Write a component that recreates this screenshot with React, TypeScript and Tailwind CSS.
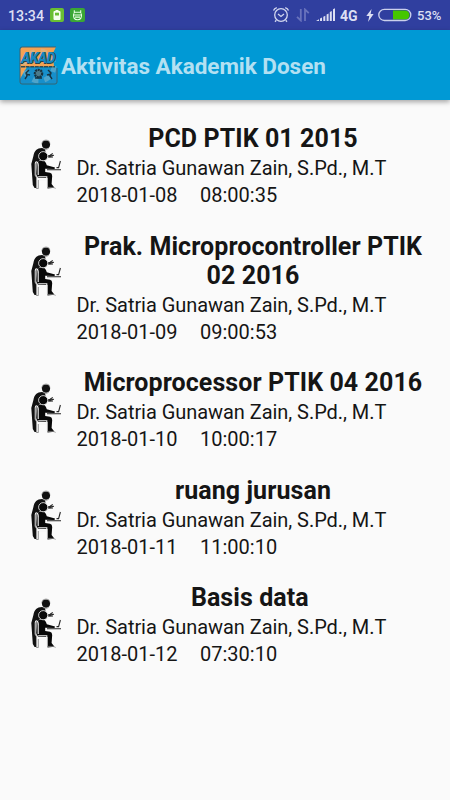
const items = [
  { title: 'PCD PTIK 01 2015', date: '2018-01-08', time: '08:00:35' },
  { title: 'Prak. Microprocontroller PTIK 02 2016', date: '2018-01-09', time: '09:00:53' },
  { title: 'Microprocessor PTIK 04 2016', date: '2018-01-10', time: '10:00:17' },
  { title: 'ruang jurusan', date: '2018-01-11', time: '11:00:10' },
  { title: 'Basis data\u00a0', date: '2018-01-12', time: '07:30:10' },
];

function StatusBar() {
  return (
    <div className="flex h-[30px] shrink-0 items-center bg-[#303f9f] pl-[8px] text-[#dcdff3]">
      <span className="w-[42px] whitespace-nowrap pt-[2px] text-[14.2px] font-medium leading-[28px]">13:34</span>
      <svg className="h-[14px] w-[14px]" viewBox="0 0 14 14">
        <rect width="14" height="14" rx="2" fill="#69bf33" />
        <path d="M5.5 2h3v1h1a1 1 0 0 1 1 1v7a1 1 0 0 1-1 1h-5a1 1 0 0 1-1-1v-7a1 1 0 0 1 1-1h1z" fill="#f5fff0" />
        <path d="M5 4.7h4v2.8H5z" fill="#69bf33" />
      </svg>
      <svg className="ml-[6px] h-[14px] w-[15px]" viewBox="0 0 15 14">
        <rect width="15" height="14" rx="2" fill="#3aa635" />
        <path d="M4.3 2.2v3M10.7 2.2v3M4.3 4.2h6.4M3 7h9M3.7 5.5c-.8 4 .6 6.2 3.8 6.2s4.6-2.2 3.8-6.2M5 9.1h5" fill="none" stroke="#e6ffe3" strokeWidth="1.1" />
      </svg>
      <svg className="ml-[187px] h-[18px] w-[18px]" viewBox="0 0 18 18" fill="none" stroke="#d2d7ef">
        <circle cx="9" cy="9" r="6.3" strokeWidth="1.3" />
        <path d="M1.5 4.5Q2.3 2.2 4.8 1.6M13.2 1.6Q15.7 2.2 16.5 4.5M6 8l3 2.4L12 8M4.3 14.3l-1.3 1.4M13.7 14.3l1.3 1.4" strokeWidth="1.3" />
      </svg>
      <svg className="ml-[6px] h-[14px] w-[14px]" viewBox="0 0 14 14" fill="none" stroke="#6973bc" strokeWidth="1.8">
        <path d="M4.8 1v11.5L1 8.8M9 13V1.5L12.8 5.2" />
      </svg>
      <svg className="ml-[6px] h-[14px] w-[20px]" viewBox="0 0 20 14" fill="#dcdff3">
        <path d="M0 13l3-1.8V13zM4 10.5l2-1V13H4zM7.3 8.7l2-1V13h-2zM10.6 6.5l2-1V13h-2zM13.8 4l2-1v10h-2zM17 1.3l2-1V13h-2z" />
      </svg>
      <span className="ml-[4px] w-[23px] pt-[2px] text-[14px] font-bold leading-[28px]">4G</span>
      <svg className="ml-[3px] h-[13px] w-[8px]" viewBox="0 0 8 13">
        <path d="M5.6 0L.3 7.1h3L2 13l5.6-7.9h-3z" fill="#dcdff3" />
      </svg>
      <svg className="ml-[4px] h-[14px] w-[34px]" viewBox="0 0 34 14">
        <path d="M15 2.5h12a4.5 4.5 0 0 1 0 9H15z" fill="#45c600" />
        <rect x=".8" y="1.3" width="32" height="11.2" rx="5.6" fill="none" stroke="#cbd0ec" strokeWidth="1.3" />
      </svg>
      <span className="ml-[5px] pt-[2px] text-[13px] font-medium leading-[28px]">53%</span>
    </div>
  );
}

function AppLogo() {
  return (
    <div className="relative h-[39px] w-[39px] shrink-0">
      <svg className="h-[39px] w-[39px]" viewBox="0 0 39 39">
        <path d="M3 1H37L34 7L35 21L8 21L1 34V3Z" fill="#f3a252" />
        <path d="M6 24L10 22H38V37H1V33Z" fill="#168fcb" />
        <circle cx="20" cy="20" r="15" fill="none" stroke="#b5cccb" strokeWidth="5" strokeDasharray="6 6" opacity=".35" />
        <path d="M37 1H3Q1 1 1 3V36Q1 38 3 38H36Q38 38 38 36V22" fill="none" stroke="#3b6170" strokeWidth="1" />
        <path d="M2 20.8H36" stroke="#344a4e" strokeWidth="1.6" strokeDasharray="4 .6" />
        <circle cx="19.5" cy="27.5" r="3.7" fill="#4c7b8b" stroke="#173341" strokeWidth="2.2" strokeDasharray="2 .7" />
        <path d="M16 32h7M10 24l-3 3 1 3-2 3M7 28l4 1M29 24l3 3-1 3 2 3M32 28l-4 1" fill="none" stroke="#173341" strokeWidth="1.4" />
      </svg>
      <span className="absolute left-[2px] top-[4px] text-[14px] font-black italic leading-[17px] tracking-[-0.6px] text-[#1788c0] [text-shadow:1px_0_0_#29424b,0_1px_0_#29424b]">AKAD</span>
    </div>
  );
}

function LecturerIcon() {
  return (
    <svg className="mt-[17px] h-[52px] w-[32px] shrink-0" viewBox="0 0 32 52">
      <path d="M12 9C7 9 4.3 11.8 3.4 17L1.3 25L2.8 46L4.6 49H7V45L6.3 41L6.5 24L10 21L10 16L15.5 12.8L15 10Z" fill="#111" />
      <circle cx="16" cy="5.6" r="4.1" fill="#111" />
      <path d="M11.5 4.8Q12 .9 16 .9T20 4.6M13.3 9.8Q16.3 11.8 18.8 9.3" fill="none" stroke="#888" strokeWidth=".6" />
      <path d="M17.2 17.1L20 16.2L22.8 14.6M18 17.4L24 16.2M18.2 18.1L23 18" fill="none" stroke="#292929" strokeWidth="1.1" />
      <path d="M7.5 23Q9.5 20.8 13 21.5Q15.7 22 16.8 26.3L25 28.4L24.5 30L15.2 29.7V33L20 33.7Q22.2 34.3 22.2 37L21.6 45L24.5 48.8L17.5 49.5L17.5 39L8 38.7L6.3 35Z" fill="#080808" />
      <circle cx="13.2" cy="17.2" r="4.6" fill="#080808" stroke="#fafafa" strokeWidth=".8" />
      <path d="M5.3 24.5Q5.7 22.2 7.2 23.1Q8.6 24 8.2 28V36M5.3 24.5V36L6.6 38.2V49H8.2V41H17M8.2 37.8H16.8V48" fill="none" stroke="#f4f4f4" strokeWidth="1.1" />
      <path d="M5 24.5V36L6.4 38.7V49.5H8.3V41" fill="none" stroke="#555" strokeWidth=".6" />
      <path d="M17 30.7H31M26.5 28.6H28.6L30.4 22" fill="none" stroke="#252525" strokeWidth="1.1" />
      <path d="M17 48.4H23L25.8 49.5" fill="none" stroke="#999" strokeWidth=".7" />
    </svg>
  );
}

export default function App() {
  return (
    <div className="flex h-[800px] w-[450px] flex-col overflow-hidden bg-[#fafafa] font-['Roboto',sans-serif]">
      <StatusBar />
      <header className="flex h-[70px] shrink-0 items-center bg-[#0099d5] pl-[19px] shadow-[0_2px_5px_rgba(0,0,0,0.35)]">
        <AppLogo />
        <h1 className="ml-[3px] mt-[3px] whitespace-nowrap text-[22.5px] font-bold tracking-[-0.03px] text-[#b3e0f2]">Aktivitas Akademik Dosen</h1>
      </header>
      <main className="flex flex-col gap-[20.4px] px-[20px] pt-[21.8px]">
        {items.map((item) => (
          <article key={item.title} className="flex pl-[10px]">
            <LecturerIcon />
            <div className="ml-[14.5px] w-[353px] pt-[2.7px] text-[20px] leading-[26.7px] text-[#151515]">
              <h2 className="pb-[2px] text-center text-[25px] font-bold leading-[29px] tracking-[0.08px]">{item.title}</h2>
              <p className="whitespace-nowrap tracking-[-0.05px]">Dr. Satria Gunawan Zain, S.Pd., M.T</p>
              <div className="flex">
                <span className="w-[123.5px]">{item.date}</span>
                <span>{item.time}</span>
              </div>
            </div>
          </article>
        ))}
      </main>
    </div>
  );
}
